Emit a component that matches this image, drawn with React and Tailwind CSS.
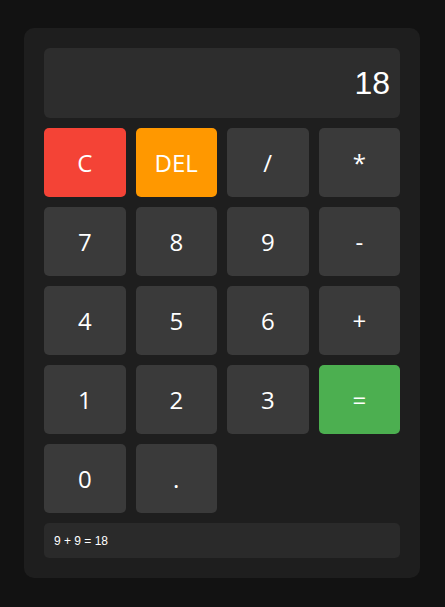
import React from "react";

const keys = [
  ["C", "bg-[#f44336]"],
  ["DEL", "bg-[#ff9800]"],
  ["/", "bg-[#3a3a3a]"],
  ["*", "bg-[#3a3a3a]"],
  ["7", "bg-[#3a3a3a]"],
  ["8", "bg-[#3a3a3a]"],
  ["9", "bg-[#3a3a3a]"],
  ["-", "bg-[#3a3a3a]"],
  ["4", "bg-[#3a3a3a]"],
  ["5", "bg-[#3a3a3a]"],
  ["6", "bg-[#3a3a3a]"],
  ["+", "bg-[#3a3a3a]"],
  ["1", "bg-[#3a3a3a]"],
  ["2", "bg-[#3a3a3a]"],
  ["3", "bg-[#3a3a3a]"],
  ["=", "bg-[#4caf50]"],
  ["0", "bg-[#3a3a3a]"],
  [".", "bg-[#3a3a3a]"],
];

export default function App() {
  return (
    <div className="min-h-screen bg-[#121212] pl-[24px] pt-[28px]">
      <div className="w-[396px] bg-[#1e1e1e] rounded-[10px] p-5 flex flex-col gap-[10px]">
        <div className="h-[70px] bg-[#2d2d2d] rounded-[6px] flex items-center justify-end px-[10px] text-white text-[32px] font-['Liberation_Sans',Arial,sans-serif]">
          18
        </div>
        <div className="grid grid-cols-4 gap-[10px]">
          {keys.map(([k, bg]) => (
            <div
              key={k}
              className={`${bg} h-[69px] rounded-[5px] flex items-center justify-center text-white text-[24px] font-['Open_Sans','Noto_Sans',sans-serif]`}
            >
              {k}
            </div>
          ))}
        </div>
        <div className="h-[35px] bg-[#2a2a2a] rounded-[5px] flex items-center px-[10px] text-white text-[12px] font-['Liberation_Sans',Arial,sans-serif]">
          9 + 9 = 18
        </div>
      </div>
    </div>
  );
}
